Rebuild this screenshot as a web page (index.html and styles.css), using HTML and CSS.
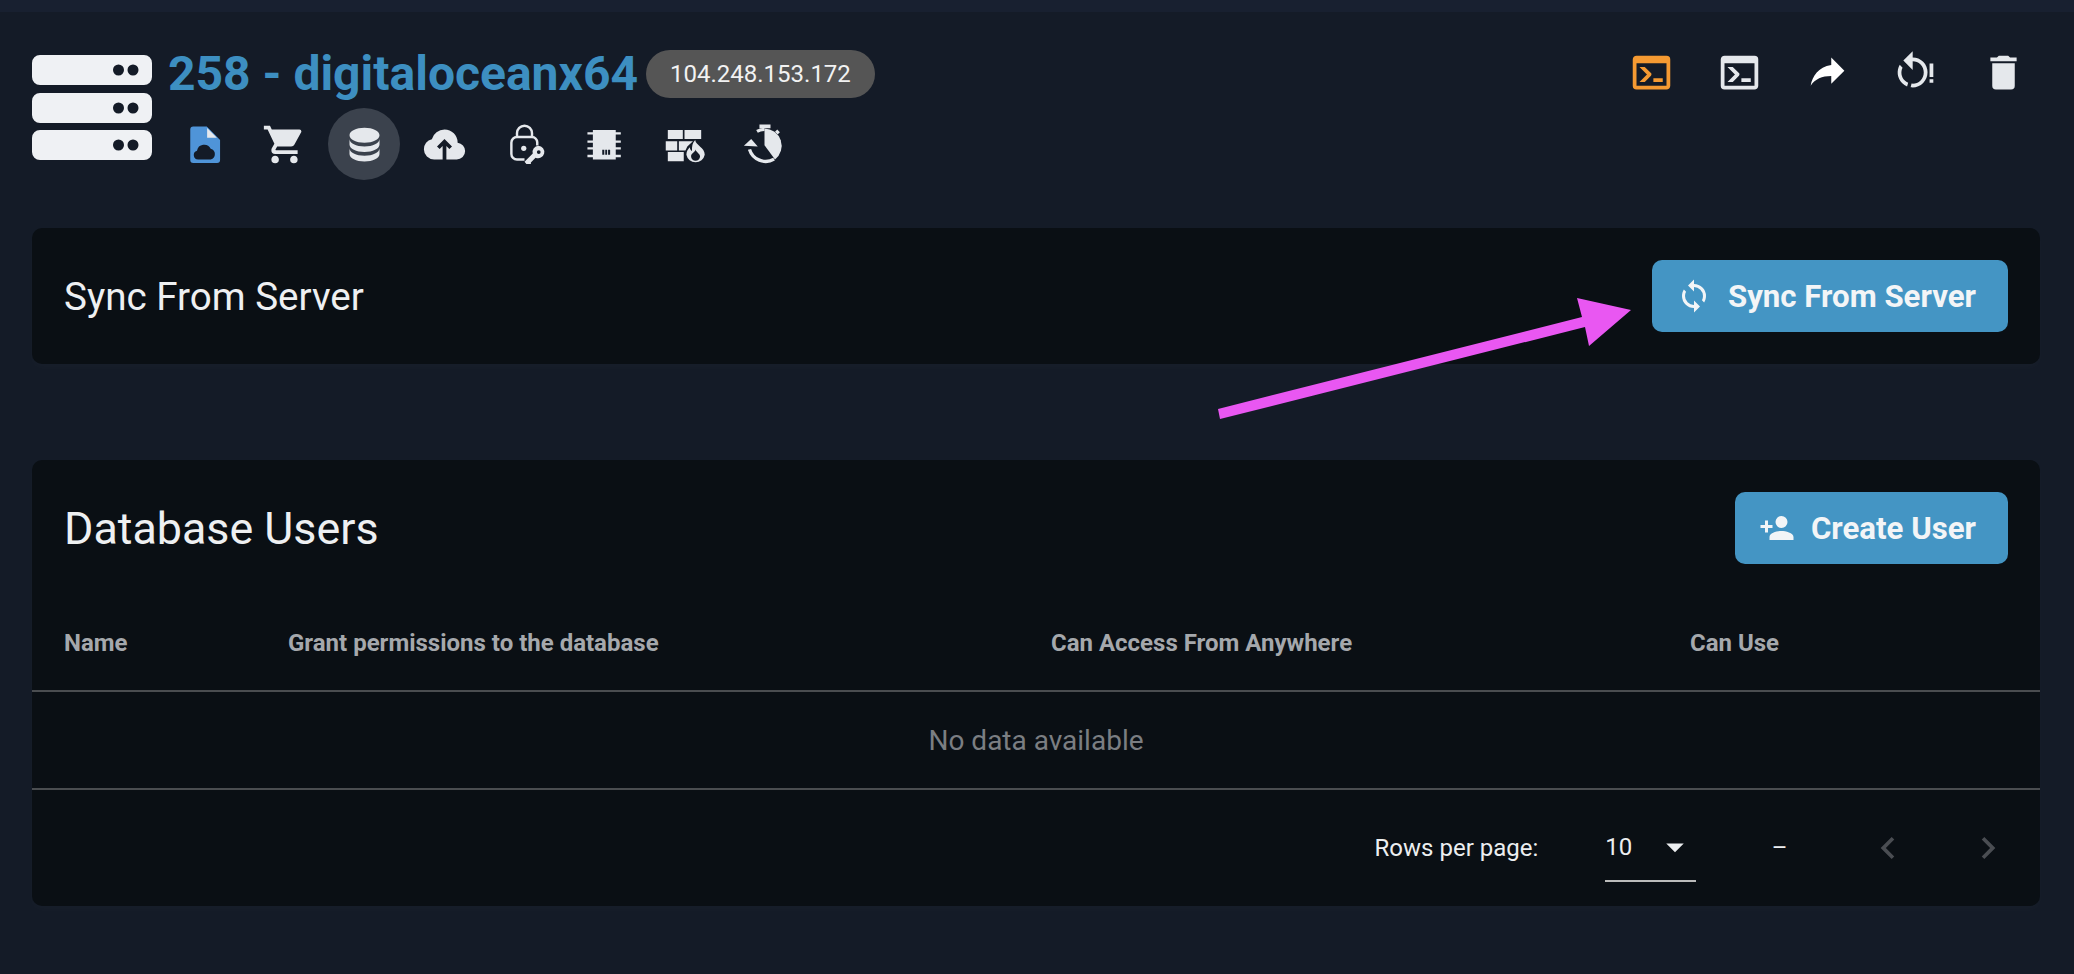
FILE: index.html
```html
<!DOCTYPE html>
<html lang="en">
<head>
<meta charset="UTF-8" />
<meta name="viewport" content="width=device-width, initial-scale=1" />
<title>Databases</title>
<link rel="stylesheet" href="styles.css">
</head>
<body>

<div class="topbar"></div>

<main class="page">
  <!-- Server header -->
  <header class="server-head">
    <svg class="server-logo" viewBox="0 0 120 105">
      <path fill-rule="evenodd" d="M8 0H112A8 8 0 0 1 120 8V22A8 8 0 0 1 112 30H8A8 8 0 0 1 0 22V8A8 8 0 0 1 8 0ZM86.5 9.5a5.5 5.5 0 1 0 0 11a5.5 5.5 0 1 0 0-11ZM101 9.5a5.5 5.5 0 1 0 0 11a5.5 5.5 0 1 0 0-11Z"/>
      <path fill-rule="evenodd" d="M8 38H112A8 8 0 0 1 120 46V60A8 8 0 0 1 112 68H8A8 8 0 0 1 0 60V46A8 8 0 0 1 8 38ZM86.5 47.5a5.5 5.5 0 1 0 0 11a5.5 5.5 0 1 0 0-11ZM101 47.5a5.5 5.5 0 1 0 0 11a5.5 5.5 0 1 0 0-11Z"/>
      <path fill-rule="evenodd" d="M8 75H112A8 8 0 0 1 120 83V97A8 8 0 0 1 112 105H8A8 8 0 0 1 0 97V83A8 8 0 0 1 8 75ZM86.5 84.5a5.5 5.5 0 1 0 0 11a5.5 5.5 0 1 0 0-11ZM101 84.5a5.5 5.5 0 1 0 0 11a5.5 5.5 0 1 0 0-11Z"/>
    </svg>

    <div class="server-info">
      <div class="server-title">
        <h1>258 - digitaloceanx64</h1>
        <span class="ip-chip">104.248.153.172</span>
      </div>
      <nav class="server-tabs">
        <a class="icon-btn tab-blue"><svg viewBox="0 0 24 24"><path fill-rule="evenodd" d="M6 2.4H13.2L20.3 9.6V20.3A1.6 1.6 0 0 1 18.7 21.9H6A1.6 1.6 0 0 1 4.4 20.3V4A1.6 1.6 0 0 1 6 2.4ZM8.6 20A2.4 2.4 0 0 1 8 15.3A3.9 3.9 0 0 1 15.3 14.2A3 3 0 0 1 15.3 20Z"/><path class="icon-light" d="M13.4 3.2L18.6 8.4H13.4Z"/></svg></a>
        <a class="icon-btn"><svg viewBox="0 0 24 24"><path d="M17,18C15.89,18 15,18.89 15,20A2,2 0 0,0 17,22A2,2 0 0,0 19,20C19,18.89 18.1,18 17,18M1,2V4H3L6.6,11.59L5.24,14.04C5.09,14.32 5,14.65 5,15A2,2 0 0,0 7,17H19V15H7.42A0.25,0.25 0 0,1 7.17,14.75C7.17,14.7 7.18,14.66 7.2,14.63L8.1,13H15.55C16.3,13 16.96,12.58 17.3,11.97L20.88,5.5C20.95,5.34 21,5.17 21,5A1,1 0 0,0 20,4H5.21L4.27,2M7,18C5.89,18 5,18.89 5,20A2,2 0 0,0 7,22A2,2 0 0,0 9,20C9,18.89 8.1,18 7,18Z"/></svg></a>
        <a class="icon-btn active"><svg viewBox="0 0 24 24"><path d="M12,3C7.58,3 4,4.79 4,7C4,9.21 7.58,11 12,11C16.42,11 20,9.21 20,7C20,4.79 16.42,3 12,3M4,9V12C4,14.21 7.58,16 12,16C16.42,16 20,14.21 20,12V9C20,11.21 16.42,13 12,13C7.58,13 4,11.21 4,9M4,14V17C4,19.21 7.58,21 12,21C16.42,21 20,19.21 20,17V14C20,16.21 16.42,18 12,18C7.58,18 4,16.21 4,14Z"/></svg></a>
        <a class="icon-btn"><svg viewBox="0 0 24 24"><path d="M6.5 20Q4.22 20 2.61 18.43 1 16.85 1 14.58 1 12.63 2.17 11.1 3.35 9.57 5.25 9.15 5.88 6.85 7.75 5.43 9.63 4 12 4 14.93 4 16.96 6.04 19 8.07 19 11 20.73 11.2 21.86 12.5 23 13.78 23 15.5 23 17.38 21.69 18.69 20.38 20 18.5 20H13V12.85L14.6 14.4L16 13L12 9L8 13L9.4 14.4L11 12.85V20H6.5Z"/></svg></a>
        <a class="icon-btn"><svg viewBox="0 0 24 24"><path class="icon-line" d="M18.8 12.5V10.8A3 3 0 0 0 16 8H8A3 3 0 0 0 5 11V17A3 3 0 0 0 8 20H12M8 8V6A4 4 0 0 1 16 6V8"/><circle cx="11.6" cy="14" r="1.4"/><path fill-rule="evenodd" d="M19.4 12.7A3.3 3.3 0 1 1 17.9 19L15.4 21.6L15.4 22.4L13 22.4L12 21.2L16.4 16.8A3.3 3.3 0 0 1 19.4 12.7ZM19.6 15A1 1 0 1 0 19.6 17A1 1 0 1 0 19.6 15Z"/></svg></a>
        <a class="icon-btn"><svg viewBox="0 0 24 24"><path fill-rule="evenodd" d="M5.8 4.2H18V5.5H20.7V6.7H18V9.9H20.7V11.1H18V13.5H20.7V14.6H18V17.4H20.7V18.8H18V20H5.8V18.8H2.9V17.4H5.8V14.6H2.9V13.5H5.8V11.1H2.9V9.9H5.8V6.7H2.9V5.5H5.8ZM10.8 14.8V17.5H11.9V14.8ZM12.4 14.8V17.5H13.4V14.8ZM13.9 14.8V17.5H15V14.8Z"/></svg></a>
        <a class="icon-btn"><svg viewBox="0 0 24 24"><path d="M3.1 4.2H11.1V9H3.1ZM12 4.2H20.9V9H12ZM2 10.2H8.1V15.2H2ZM9 10.2H16.5L13.5 13L12.5 15.2H9ZM3.1 16H11.6V20.9H3.1Z"/><path fill-rule="evenodd" d="M17.7 9.6C18 12.5 22.8 13.5 22.8 17.5A5 5 0 0 1 13 17.5C13 15.5 14 14.5 14.8 13.5C15 14.8 15.4 15.2 16 15.4C15.9 13 16.2 11 17.7 9.6ZM17.8 14.6C17.8 16 15.5 16.5 15.5 18.3A2.4 2.4 0 0 0 20.3 18.3C20.3 16.8 18.2 16 17.8 14.6Z"/></svg></a>
        <a class="icon-btn"><svg viewBox="0 0 24 24"><path d="M9.3 1.3H15.2V3.3H9.3ZM18.8 4L20.2 5.4L19 6.6L17.6 5.2Z"/><path d="M12 3.4A9.3 9.3 0 0 1 17.6 20L12 12.4Z"/><path class="icon-line icon-line-thick" d="M17.1 19.8A9 9 0 0 1 4 14.6M8 5A9 9 0 0 1 12 3.9"/><path d="M1 12.6L4.9 9L8.4 13Z"/></svg></a>
      </nav>
    </div>

    <div class="server-actions">
      <a class="icon-btn tab-orange"><svg viewBox="0 0 24 24"><path d="M20,19V7H4V19H20M20,3A2,2 0 0,1 22,5V19C22,20.1 21.1,21 20,21H4A2,2 0 0,1 2,19V5C2,3.89 2.9,3 4,3H20M13,17V15H18V17H13M9.58,13L5.57,9H8.4L11.7,12.3C12.09,12.69 12.09,13.33 11.7,13.72L8.42,17H5.59L9.58,13Z"/></svg></a>
      <a class="icon-btn"><svg viewBox="0 0 24 24"><path d="M20,19V7H4V19H20M20,3A2,2 0 0,1 22,5V19C22,20.1 21.1,21 20,21H4A2,2 0 0,1 2,19V5C2,3.89 2.9,3 4,3H20M13,17V15H18V17H13M9.58,13L5.57,9H8.4L11.7,12.3C12.09,12.69 12.09,13.33 11.7,13.72L8.42,17H5.59L9.58,13Z"/></svg></a>
      <a class="icon-btn tab-white"><svg viewBox="0 0 24 24"><path d="M21,11L14,4V8C7,9 4,14 3,19C5.5,15.5 9,13.9 14,13.9V18L21,11Z"/></svg></a>
      <a class="icon-btn"><svg viewBox="0 0 24 24"><path d="M10.5 4C12.6 4 14.6 4.8 16.1 6.3C19.2 9.4 19.2 14.5 16.1 17.6C14.3 19.5 11.8 20.2 9.4 19.9L9.9 17.9C11.6 18.1 13.4 17.5 14.7 16.2C17 13.9 17 10.1 14.7 7.7C13.6 6.6 12 6 10.5 6V10.6L5.5 5.6L10.5 0.6V4M4.8 17.6C2.2 15 1.8 11 3.6 7.9L5.1 9.4C4 11.6 4.4 14.4 6.3 16.2C6.8 16.7 7.4 17.1 8.1 17.4L7.5 19.4C6.5 19 5.6 18.4 4.8 17.6ZM19.5 7.2H21.5V14.4H19.5ZM19.5 15.6H21.5V17.4H19.5Z"/></svg></a>
      <a class="icon-btn"><svg viewBox="0 0 24 24"><path d="M19,4H15.5L14.5,3H9.5L8.5,4H5V6H19M6,19A2,2 0 0,0 8,21H16A2,2 0 0,0 18,19V7H6V19Z"/></svg></a>
    </div>
  </header>

  <!-- Sync card -->
  <section class="card sync-card">
    <h2 class="sync-title">Sync From Server</h2>
    <button class="btn">
      <svg viewBox="0 0 24 24"><path d="M12,18A6,6 0 0,1 6,12C6,11 6.25,10.03 6.7,9.2L5.24,7.74C4.46,8.97 4,10.43 4,12A8,8 0 0,0 12,20V23L16,19L12,15M12,4V1L8,5L12,9V6A6,6 0 0,1 18,12C18,13 17.75,13.97 17.3,14.8L18.76,16.26C19.54,15.03 20,13.57 20,12A8,8 0 0,0 12,4Z"/></svg>
      Sync From Server
    </button>
  </section>

  <!-- Users table -->
  <section class="card users-card">
    <div class="users-head">
      <h2 class="users-title">Database Users</h2>
      <button class="btn btn-create">
        <svg viewBox="0 0 24 24"><path d="M15,14C12.33,14 7,15.33 7,18V20H23V18C23,15.33 17.67,14 15,14M6,10V7H4V10H1V12H4V15H6V12H9V10M15,12A4,4 0 0,0 19,8A4,4 0 0,0 15,4A4,4 0 0,0 11,8A4,4 0 0,0 15,12Z"/></svg>
        Create User
      </button>
    </div>

    <table class="users-table">
      <thead>
        <tr>
          <th class="col-name">Name</th>
          <th class="col-grant">Grant permissions to the database</th>
          <th class="col-access">Can Access From Anywhere</th>
          <th>Can Use</th>
        </tr>
      </thead>
      <tbody>
        <tr><td colspan="4">No data available</td></tr>
      </tbody>
    </table>

    <div class="table-foot">
      <span>Rows per page:</span>
      <div class="rows-select">
        <span>10</span>
        <svg viewBox="0 0 24 24"><path d="M7,10L12,15L17,10H7Z"/></svg>
      </div>
      <span class="page-range">&ndash;</span>
      <svg class="page-arrow" viewBox="0 0 24 24"><path d="M15.41,16.58L10.83,12L15.41,7.41L14,6L8,12L14,18L15.41,16.58Z"/></svg>
      <svg class="page-arrow" viewBox="0 0 24 24"><path d="M8.59,16.58L13.17,12L8.59,7.41L10,6L16,12L10,18L8.59,16.58Z"/></svg>
    </div>
  </section>
</main>

<!-- Annotation drawn on top of the page -->
<svg class="annotation" viewBox="0 0 2074 974">
  <polygon points="1218,409 1582,317 1577,298 1631,310 1589,346 1585,327 1220,419" />
</svg>

</body>
</html>
```

FILE: styles.css
```css
* {
  box-sizing: border-box;
}
html, body {
  margin: 0;
  height: 100%;
}
body {
  background: #141b27;
  color: #e7eaee;
  font-family: Roboto, "Liberation Sans", sans-serif;
  overflow: hidden;
  position: relative;
}
.topbar {
  height: 12px;
  background: #182030;
}
.page {
  padding: 38px 34px 0 32px;
}

/* Server header */
.server-head {
  display: flex;
  align-items: flex-start;
  height: 130px;
}
.server-logo {
  width: 120px;
  height: 105px;
  margin-top: 5px;
  fill: #eff1f4;
  flex: none;
}
.server-info {
  margin-left: 16px;
  flex: 1;
}
.server-title {
  display: flex;
  align-items: center;
  height: 48px;
  gap: 8px;
}
.server-title h1 {
  margin: 0;
  font-size: 48px;
  font-weight: 700;
  line-height: 48px;
  color: #3d8fc1;
}
.ip-chip {
  background: #555;
  color: #f2f2f2;
  font-size: 24px;
  height: 48px;
  line-height: 48px;
  padding: 0 24px;
  border-radius: 24px;
}
.server-tabs {
  display: flex;
  gap: 8px;
  margin-top: 10px;
}
.server-actions {
  display: flex;
  gap: 16px;
  margin-top: -14px;
  margin-right: 1px;
}
.icon-btn {
  width: 72px;
  height: 72px;
  border-radius: 50%;
  display: flex;
  align-items: center;
  justify-content: center;
  fill: #e5e8ec;
}
.icon-btn svg {
  width: 45px;
  height: 45px;
}
.icon-btn.active {
  background: #3b424d;
}
.tab-blue {
  fill: #4f94d8;
}
.tab-orange {
  fill: #f59a32;
}
.tab-white {
  fill: #fff;
}
.icon-light {
  fill: #e5e8ec;
}
.icon-line {
  fill: none;
  stroke: #e5e8ec;
  stroke-width: 1.3;
}
.icon-line-thick {
  stroke-width: 1.8;
}

/* Cards */
.card {
  background: #0a0f14;
  border-radius: 10px;
  box-shadow: 0 4px 10px rgb(255 255 255 / 0.02);
}
.sync-card {
  display: flex;
  align-items: center;
  justify-content: space-between;
  height: 136px;
  margin-top: 48px;
  padding: 0 32px;
}
.sync-title {
  margin: 0;
  font-size: 38.6px;
  font-weight: 400;
  color: #eef0f2;
}
.btn {
  display: flex;
  align-items: center;
  height: 72px;
  padding: 0 32px 0 24px;
  border: none;
  border-radius: 10px;
  background: #4495c4;
  color: #f3f5f7;
  font-family: inherit;
  font-size: 31.2px;
  font-weight: 700;
  fill: #f3f5f7;
  gap: 16px;
}
.btn svg {
  width: 36px;
  height: 36px;
}
.users-card {
  height: 446px;
  margin-top: 96px;
}
.users-head {
  display: flex;
  align-items: center;
  justify-content: space-between;
  padding: 32px 32px 0;
}
.users-title {
  margin: 0;
  font-size: 44.8px;
  font-weight: 400;
  color: #eef0f2;
}

/* Table */
.users-table {
  width: 100%;
  border-collapse: collapse;
  margin-top: 31px;
  table-layout: fixed;
}
.users-table th {
  height: 96px;
  padding: 0 32px;
  text-align: left;
  font-size: 24px;
  font-weight: 700;
  color: #a5a8ac;
  border-bottom: 2px solid #4a4d50;
}
.col-name {
  width: 224px;
}
.col-grant {
  width: 763px;
}
.col-access {
  width: 639px;
}
.users-table td {
  height: 98px;
  text-align: center;
  font-size: 28px;
  color: #7b7e82;
  border-bottom: 2px solid #4a4d50;
}
.table-foot {
  display: flex;
  align-items: center;
  height: 115px;
  padding-right: 30px;
  justify-content: flex-end;
  font-size: 24px;
  color: #eceef0;
}
.rows-select {
  display: flex;
  align-items: center;
  justify-content: space-between;
  width: 91px;
  height: 68px;
  margin-left: 67px;
  border-bottom: 2px solid #bbb;
  fill: #eceef0;
}
.rows-select svg {
  width: 42px;
  height: 42px;
}
.page-range {
  margin-left: 75.6px;
  margin-right: 78.4px;
}
.page-arrow {
  width: 44px;
  height: 44px;
  fill: #4a4d52;
  margin-left: 56px;
}
.page-range + .page-arrow {
  margin-left: 0;
}

/* Annotation */
.annotation {
  position: absolute;
  top: 0;
  left: 0;
  width: 2074px;
  height: 974px;
  pointer-events: none;
  fill: #e957f2;
}
```
